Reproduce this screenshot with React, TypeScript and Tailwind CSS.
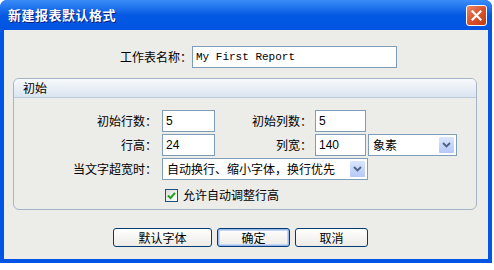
import React from 'react';

const cjk = { fontFamily: '"Noto Sans CJK SC", "Liberation Sans", sans-serif' };

const TextBox = ({ value, className, mono }: { value: string; className: string; mono?: boolean }) => (
  <div
    className={`h-[22px] bg-white border border-[#7f9db9] flex items-center px-[3px] text-[12px] text-black ${className}`}
    style={mono ? { fontFamily: '"Liberation Mono", monospace', fontSize: 11 } : { fontFamily: '"Liberation Sans", sans-serif' }}
  >
    {value}
  </div>
);

const DropArrow = () => (
  <div className="w-[17px] h-[18px] mr-[1px] rounded-[2px] border border-white bg-gradient-to-b from-[#dbe6fd] to-[#b4c8f6] flex items-center justify-center">
    <svg width="9" height="6" viewBox="0 0 9 6">
      <path d="M1 1 L4.5 4.5 L8 1" fill="none" stroke="#4d6185" strokeWidth="1.8" />
    </svg>
  </div>
);

const Select = ({ value, className }: { value: string; className: string }) => (
  <div className={`h-[22px] bg-white border border-[#7f9db9] flex items-center justify-between pl-[4px] text-[12px] text-black ${className}`}>
    <span>{value}</span>
    <DropArrow />
  </div>
);

const Button = ({ label, primary, className }: { label: string; primary?: boolean; className: string }) => (
  <div
    className={`h-[19px] rounded-[3px] border border-[#003c74] bg-gradient-to-b from-white to-[#ecebe6] flex items-center justify-center text-[12px] text-black ${primary ? 'shadow-[inset_0_0_0_1px_#9db8ea,inset_0_0_0_2px_#c6d7f5]' : ''} ${className}`}
  >
    {label}
  </div>
);

export default function App() {
  return (
    <div className="w-[494px] h-[270px] bg-white" style={cjk}>
      <div className="w-[492px] h-[263px] flex flex-col rounded-t-[7px] overflow-hidden bg-[#0055e5]">
        {/* Title bar */}
        <div className="h-[30px] flex items-center justify-between pl-[8px] pr-[5px] bg-gradient-to-b from-[#3a8cf8] via-[#0459e3] to-[#0054e2]">
          <span className="text-white font-bold text-[13px] tracking-[0.5px] [text-shadow:1px_1px_0_#0a1e7a]">新建报表默认格式</span>
          <div className="w-[21px] h-[21px] rounded-[3px] border border-white bg-gradient-to-br from-[#e9896b] via-[#d9522a] to-[#c23b14] flex items-center justify-center">
            <svg width="11" height="11" viewBox="0 0 11 11">
              <path d="M1.5 1.5 L9.5 9.5 M9.5 1.5 L1.5 9.5" stroke="white" strokeWidth="2.2" strokeLinecap="square" />
            </svg>
          </div>
        </div>

        {/* Client area */}
        <div className="flex-1 mx-[4px] mb-[4px] bg-[#ecece9] flex flex-col text-[12px] text-black">
          <div className="flex items-center mt-[16px] pl-[116px]">
            <span className="w-[72px] text-right">工作表名称：</span>
            <TextBox value="My First Report" mono className="w-[205px]" />
          </div>

          {/* Group box */}
          <div className="ml-[9px] mt-[10px] w-[464px] h-[132px] rounded-[6px] border border-[#a5b4c6] overflow-hidden flex flex-col">
            <div className="h-[19px] flex items-center pl-[9px] border-b border-[#bccbdb] bg-gradient-to-b from-[#f7f9fc] to-[#dbe5f0]">
              初始
            </div>
            <div className="flex flex-col gap-[2px] mt-[12px]">
              <div className="flex items-center">
                <span className="w-[144px] text-right pr-[1px]">初始行数：</span>
                <TextBox value="5" className="w-[53px] ml-[4px]" />
                <span className="w-[97px] text-right">初始列数：</span>
                <TextBox value="5" className="w-[51px] ml-[3px]" />
              </div>
              <div className="flex items-center">
                <span className="w-[144px] text-right pr-[1px]">行高：</span>
                <TextBox value="24" className="w-[53px] ml-[4px]" />
                <span className="w-[97px] text-right">列宽：</span>
                <TextBox value="140" className="w-[51px] ml-[3px]" />
                <Select value="象素" className="w-[89px] ml-[2px]" />
              </div>
              <div className="flex items-center">
                <span className="w-[144px] text-right pr-[1px]">当文字超宽时：</span>
                <Select value="自动换行、缩小字体，换行优先" className="w-[206px] ml-[4px]" />
              </div>
              <div className="flex items-center mt-[4px] pl-[151px]">
                <div className="w-[13px] h-[13px] border border-[#1c5180] bg-gradient-to-br from-[#dcdcd7] to-white flex items-center justify-center">
                  <svg width="9" height="9" viewBox="0 0 9 9">
                    <path d="M1 4.5 L3.5 7 L8 1.8" fill="none" stroke="#21a121" strokeWidth="2" />
                  </svg>
                </div>
                <span className="ml-[5px]">允许自动调整行高</span>
              </div>
            </div>
          </div>

          {/* Buttons */}
          <div className="flex mt-[18px] pl-[109px] gap-[5px]">
            <Button label="默认字体" className="w-[99px]" />
            <Button label="确定" primary className="w-[73px]" />
            <Button label="取消" className="w-[73px]" />
          </div>
        </div>
      </div>
    </div>
  );
}
